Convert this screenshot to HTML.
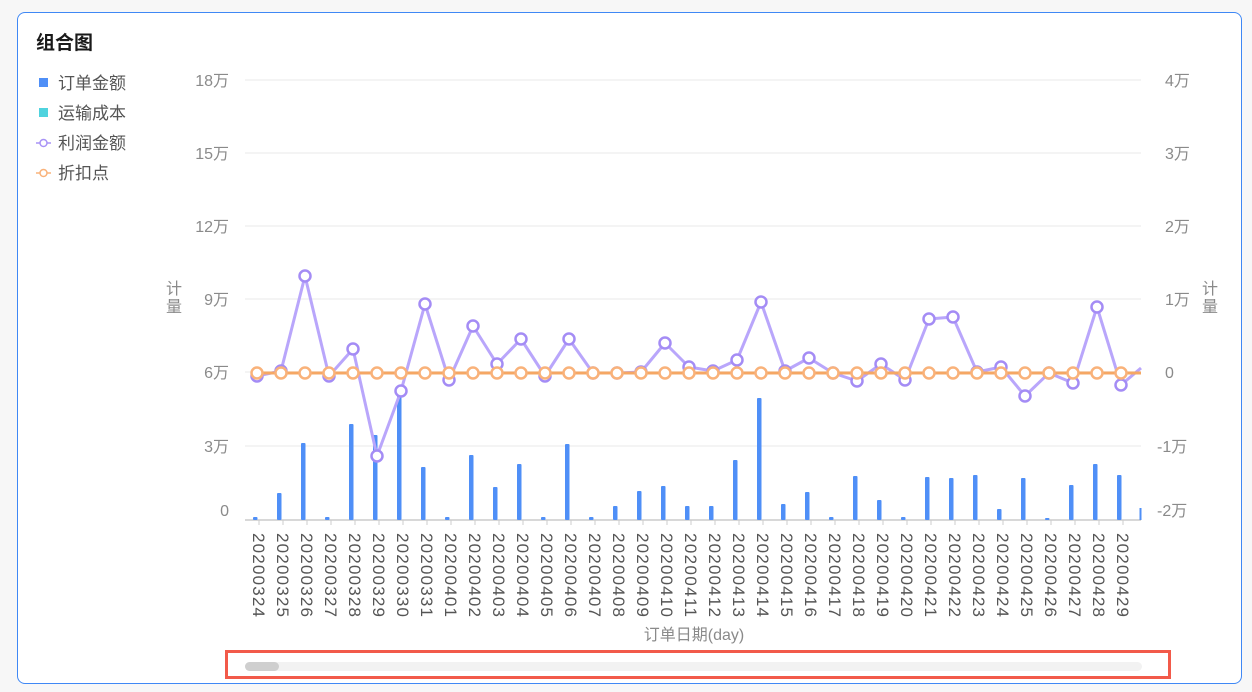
<!DOCTYPE html>
<html><head><meta charset="utf-8"><style>
body{margin:0;background:#f7f7f7;width:1252px;height:692px;overflow:hidden;font-family:"Liberation Sans","Noto Sans CJK SC",sans-serif}
.card{position:absolute;left:17px;top:12px;width:1223px;height:670px;background:#fff;border:1px solid #3f88f5;border-radius:8px}
</style></head><body>
<div class="card"></div>
<svg width="1252" height="692" style="position:absolute;left:0;top:0" font-family="Liberation Sans, Noto Sans CJK SC, sans-serif">
<text x="36" y="49" font-size="19" font-weight="bold" fill="#1a1a1a">组合图</text>
<g font-size="17" fill="#555">
<rect x="39" y="78" width="9" height="9" fill="#4f8ff7"/><text x="58" y="89">订单金额</text>
<rect x="39" y="108" width="9" height="9" fill="#4fd3de"/><text x="58" y="119">运输成本</text>
<line x1="36" y1="143" x2="51" y2="143" stroke="#a893f6" stroke-width="1.5"/><circle cx="43.5" cy="143" r="3.5" fill="#fff" stroke="#a893f6" stroke-width="1.5"/><text x="58" y="149">利润金额</text>
<line x1="36" y1="173" x2="51" y2="173" stroke="#f9b27a" stroke-width="1.5"/><circle cx="43.5" cy="173" r="3.5" fill="#fff" stroke="#f9b27a" stroke-width="1.5"/><text x="58" y="179">折扣点</text>
</g>
<g stroke="#f0f0f0" stroke-width="1.5">
<line x1="245" y1="80" x2="1141" y2="80"/><line x1="245" y1="153" x2="1141" y2="153"/><line x1="245" y1="226" x2="1141" y2="226"/><line x1="245" y1="299" x2="1141" y2="299"/><line x1="245" y1="372" x2="1141" y2="372"/><line x1="245" y1="446" x2="1141" y2="446"/>
</g>
<g font-size="16" fill="#8a8a8a" text-anchor="end">
<text x="229" y="86">18万</text><text x="229" y="159">15万</text><text x="229" y="232">12万</text><text x="229" y="305">9万</text><text x="229" y="378">6万</text><text x="229" y="452">3万</text><text x="229" y="516">0</text>
</g>
<g font-size="16" fill="#8a8a8a">
<text x="1165" y="86">4万</text><text x="1165" y="159">3万</text><text x="1165" y="232">2万</text><text x="1165" y="305">1万</text><text x="1165" y="378">0</text><text x="1157" y="452">-1万</text><text x="1157" y="516">-2万</text>
</g>
<g font-size="16" fill="#8a8a8a" text-anchor="middle">
<text x="174" y="294">计</text><text x="174" y="312">量</text>
<text x="1210" y="294">计</text><text x="1210" y="312">量</text>
<text x="694" y="640">订单日期(day)</text>
</g>
<line x1="245" y1="520" x2="1141" y2="520" stroke="#ccc" stroke-width="1.5"/>
<g fill="#4f8ff7">
<rect x="253" y="517" width="4.5" height="3" rx="1"/>
<rect x="277" y="493" width="4.5" height="27" rx="1"/>
<rect x="301" y="443" width="4.5" height="77" rx="1"/>
<rect x="325" y="517" width="4.5" height="3" rx="1"/>
<rect x="349" y="424" width="4.5" height="96" rx="1"/>
<rect x="373" y="435" width="4.5" height="85" rx="1"/>
<rect x="397" y="393" width="4.5" height="127" rx="1"/>
<rect x="421" y="467" width="4.5" height="53" rx="1"/>
<rect x="445" y="517" width="4.5" height="3" rx="1"/>
<rect x="469" y="455" width="4.5" height="65" rx="1"/>
<rect x="493" y="487" width="4.5" height="33" rx="1"/>
<rect x="517" y="464" width="4.5" height="56" rx="1"/>
<rect x="541" y="517" width="4.5" height="3" rx="1"/>
<rect x="565" y="444" width="4.5" height="76" rx="1"/>
<rect x="589" y="517" width="4.5" height="3" rx="1"/>
<rect x="613" y="506" width="4.5" height="14" rx="1"/>
<rect x="637" y="491" width="4.5" height="29" rx="1"/>
<rect x="661" y="486" width="4.5" height="34" rx="1"/>
<rect x="685" y="506" width="4.5" height="14" rx="1"/>
<rect x="709" y="506" width="4.5" height="14" rx="1"/>
<rect x="733" y="460" width="4.5" height="60" rx="1"/>
<rect x="757" y="398" width="4.5" height="122" rx="1"/>
<rect x="781" y="504" width="4.5" height="16" rx="1"/>
<rect x="805" y="492" width="4.5" height="28" rx="1"/>
<rect x="829" y="517" width="4.5" height="3" rx="1"/>
<rect x="853" y="476" width="4.5" height="44" rx="1"/>
<rect x="877" y="500" width="4.5" height="20" rx="1"/>
<rect x="901" y="517" width="4.5" height="3" rx="1"/>
<rect x="925" y="477" width="4.5" height="43" rx="1"/>
<rect x="949" y="478" width="4.5" height="42" rx="1"/>
<rect x="973" y="475" width="4.5" height="45" rx="1"/>
<rect x="997" y="509" width="4.5" height="11" rx="1"/>
<rect x="1021" y="478" width="4.5" height="42" rx="1"/>
<rect x="1045" y="518" width="4.5" height="2" rx="1"/>
<rect x="1069" y="485" width="4.5" height="35" rx="1"/>
<rect x="1093" y="464" width="4.5" height="56" rx="1"/>
<rect x="1117" y="475" width="4.5" height="45" rx="1"/>
<rect x="1139.5" y="508" width="2" height="12"/>
</g>
<g stroke="#ccc" stroke-width="1">
<path d="M259 520v5M283 520v5M307 520v5M331 520v5M355 520v5M379 520v5M403 520v5M427 520v5M451 520v5M475 520v5M499 520v5M523 520v5M547 520v5M571 520v5M595 520v5M619 520v5M643 520v5M667 520v5M691 520v5M715 520v5M739 520v5M763 520v5M787 520v5M811 520v5M835 520v5M859 520v5M883 520v5M907 520v5M931 520v5M955 520v5M979 520v5M1003 520v5M1027 520v5M1051 520v5M1075 520v5M1099 520v5M1123 520v5"/>
</g>
<polyline fill="none" stroke="#b9a6fb" stroke-width="3" stroke-linejoin="round" points="257,376 281,371 305,276 329,376 353,349 377,456 401,391 425,304 449,380 473,326 497,364 521,339 545,376 569,339 593,373 617,373 641,372 665,343 689,367 713,371 737,360 761,302 785,371 809,358 833,373 857,381 881,364 905,380 929,319 953,317 977,372 1001,367 1025,396 1049,373 1073,383 1097,307 1121,385 1141,368"/>
<g fill="#fff" stroke="#a48cf5" stroke-width="2.5">
<circle cx="257" cy="376" r="5.5"/><circle cx="281" cy="371" r="5.5"/><circle cx="305" cy="276" r="5.5"/><circle cx="329" cy="376" r="5.5"/><circle cx="353" cy="349" r="5.5"/><circle cx="377" cy="456" r="5.5"/><circle cx="401" cy="391" r="5.5"/><circle cx="425" cy="304" r="5.5"/><circle cx="449" cy="380" r="5.5"/><circle cx="473" cy="326" r="5.5"/><circle cx="497" cy="364" r="5.5"/><circle cx="521" cy="339" r="5.5"/><circle cx="545" cy="376" r="5.5"/><circle cx="569" cy="339" r="5.5"/><circle cx="593" cy="373" r="5.5"/><circle cx="617" cy="373" r="5.5"/><circle cx="641" cy="372" r="5.5"/><circle cx="665" cy="343" r="5.5"/><circle cx="689" cy="367" r="5.5"/><circle cx="713" cy="371" r="5.5"/><circle cx="737" cy="360" r="5.5"/><circle cx="761" cy="302" r="5.5"/><circle cx="785" cy="371" r="5.5"/><circle cx="809" cy="358" r="5.5"/><circle cx="833" cy="373" r="5.5"/><circle cx="857" cy="381" r="5.5"/><circle cx="881" cy="364" r="5.5"/><circle cx="905" cy="380" r="5.5"/><circle cx="929" cy="319" r="5.5"/><circle cx="953" cy="317" r="5.5"/><circle cx="977" cy="372" r="5.5"/><circle cx="1001" cy="367" r="5.5"/><circle cx="1025" cy="396" r="5.5"/><circle cx="1049" cy="373" r="5.5"/><circle cx="1073" cy="383" r="5.5"/><circle cx="1097" cy="307" r="5.5"/><circle cx="1121" cy="385" r="5.5"/>
</g>
<line x1="257" y1="373" x2="1141" y2="373" stroke="#f5a764" stroke-width="3"/>
<g fill="#fff" stroke="#f9b27a" stroke-width="2.5">
<circle cx="257" cy="373" r="5.5"/><circle cx="281" cy="373" r="5.5"/><circle cx="305" cy="373" r="5.5"/><circle cx="329" cy="373" r="5.5"/><circle cx="353" cy="373" r="5.5"/><circle cx="377" cy="373" r="5.5"/><circle cx="401" cy="373" r="5.5"/><circle cx="425" cy="373" r="5.5"/><circle cx="449" cy="373" r="5.5"/><circle cx="473" cy="373" r="5.5"/><circle cx="497" cy="373" r="5.5"/><circle cx="521" cy="373" r="5.5"/><circle cx="545" cy="373" r="5.5"/><circle cx="569" cy="373" r="5.5"/><circle cx="593" cy="373" r="5.5"/><circle cx="617" cy="373" r="5.5"/><circle cx="641" cy="373" r="5.5"/><circle cx="665" cy="373" r="5.5"/><circle cx="689" cy="373" r="5.5"/><circle cx="713" cy="373" r="5.5"/><circle cx="737" cy="373" r="5.5"/><circle cx="761" cy="373" r="5.5"/><circle cx="785" cy="373" r="5.5"/><circle cx="809" cy="373" r="5.5"/><circle cx="833" cy="373" r="5.5"/><circle cx="857" cy="373" r="5.5"/><circle cx="881" cy="373" r="5.5"/><circle cx="905" cy="373" r="5.5"/><circle cx="929" cy="373" r="5.5"/><circle cx="953" cy="373" r="5.5"/><circle cx="977" cy="373" r="5.5"/><circle cx="1001" cy="373" r="5.5"/><circle cx="1025" cy="373" r="5.5"/><circle cx="1049" cy="373" r="5.5"/><circle cx="1073" cy="373" r="5.5"/><circle cx="1097" cy="373" r="5.5"/><circle cx="1121" cy="373" r="5.5"/>
</g>
<rect x="1142" y="360" width="10" height="30" fill="#fff"/>
<g font-size="17" fill="#555">
<text transform="translate(253,533) rotate(90)" textLength="84">20200324</text>
<text transform="translate(277,533) rotate(90)" textLength="84">20200325</text>
<text transform="translate(301,533) rotate(90)" textLength="84">20200326</text>
<text transform="translate(325,533) rotate(90)" textLength="84">20200327</text>
<text transform="translate(349,533) rotate(90)" textLength="84">20200328</text>
<text transform="translate(373,533) rotate(90)" textLength="84">20200329</text>
<text transform="translate(397,533) rotate(90)" textLength="84">20200330</text>
<text transform="translate(421,533) rotate(90)" textLength="84">20200331</text>
<text transform="translate(445,533) rotate(90)" textLength="84">20200401</text>
<text transform="translate(469,533) rotate(90)" textLength="84">20200402</text>
<text transform="translate(493,533) rotate(90)" textLength="84">20200403</text>
<text transform="translate(517,533) rotate(90)" textLength="84">20200404</text>
<text transform="translate(541,533) rotate(90)" textLength="84">20200405</text>
<text transform="translate(565,533) rotate(90)" textLength="84">20200406</text>
<text transform="translate(589,533) rotate(90)" textLength="84">20200407</text>
<text transform="translate(613,533) rotate(90)" textLength="84">20200408</text>
<text transform="translate(637,533) rotate(90)" textLength="84">20200409</text>
<text transform="translate(661,533) rotate(90)" textLength="84">20200410</text>
<text transform="translate(685,533) rotate(90)" textLength="84">20200411</text>
<text transform="translate(709,533) rotate(90)" textLength="84">20200412</text>
<text transform="translate(733,533) rotate(90)" textLength="84">20200413</text>
<text transform="translate(757,533) rotate(90)" textLength="84">20200414</text>
<text transform="translate(781,533) rotate(90)" textLength="84">20200415</text>
<text transform="translate(805,533) rotate(90)" textLength="84">20200416</text>
<text transform="translate(829,533) rotate(90)" textLength="84">20200417</text>
<text transform="translate(853,533) rotate(90)" textLength="84">20200418</text>
<text transform="translate(877,533) rotate(90)" textLength="84">20200419</text>
<text transform="translate(901,533) rotate(90)" textLength="84">20200420</text>
<text transform="translate(925,533) rotate(90)" textLength="84">20200421</text>
<text transform="translate(949,533) rotate(90)" textLength="84">20200422</text>
<text transform="translate(973,533) rotate(90)" textLength="84">20200423</text>
<text transform="translate(997,533) rotate(90)" textLength="84">20200424</text>
<text transform="translate(1021,533) rotate(90)" textLength="84">20200425</text>
<text transform="translate(1045,533) rotate(90)" textLength="84">20200426</text>
<text transform="translate(1069,533) rotate(90)" textLength="84">20200427</text>
<text transform="translate(1093,533) rotate(90)" textLength="84">20200428</text>
<text transform="translate(1117,533) rotate(90)" textLength="84">20200429</text>
</g>
<rect x="226.5" y="651.5" width="943" height="26" fill="none" stroke="#f25a4a" stroke-width="3"/>
<rect x="245" y="662" width="897" height="9" rx="4.5" fill="#f2f2f2"/>
<rect x="245" y="662" width="34" height="9" rx="4.5" fill="#cfcfcf"/>
</svg>
</body></html>
